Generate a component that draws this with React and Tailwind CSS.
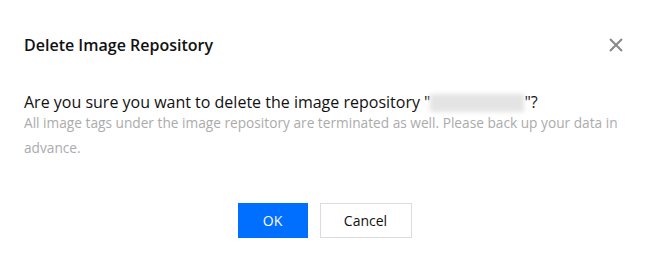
import React from 'react';

const CloseIcon = () => (
  <svg className="w-[14px] h-[14px]" viewBox="0 0 14 14" fill="none" stroke="#888888" strokeWidth={2}>
    <path d="M1 1l12 12M13 1L1 13" />
  </svg>
);

export default function App() {
  return (
    <div className="w-[649px] h-[255px] bg-white flex flex-col font-['Open_Sans',sans-serif] text-black">
      {/* Header */}
      <div className="flex items-center justify-between pt-[33px] pl-6 pr-[26px]">
        <h2 className="text-[16px] leading-6 font-semibold text-[#111]">Delete Image Repository</h2>
        <button className="flex items-center justify-center">
          <CloseIcon />
        </button>
      </div>

      {/* Body */}
      <div className="px-6 mt-[39px]">
        <p className="text-[16px] leading-[12px] text-[#111]">
          Are you sure you want to delete the image repository "
          <span className="inline-block w-[94px] h-[18px] -my-[5px] bg-[#e4e4e4] blur-[2px] align-[1px]" />
          "?
        </p>
        <p className="mt-[2px] text-[13.7px] leading-[25px] text-[#ababab]">
          All image tags under the image repository are terminated as well. Please back up your data in advance.
        </p>
      </div>

      {/* Footer */}
      <div className="flex justify-center gap-3 mt-[43px]">
        <button className="w-[70px] h-[35px] bg-[#006eff] text-white text-[14px]">OK</button>
        <button className="w-[92px] h-[35px] border border-[#dcdcdc] bg-white text-[14px] text-[#111]">Cancel</button>
      </div>
    </div>
  );
}
